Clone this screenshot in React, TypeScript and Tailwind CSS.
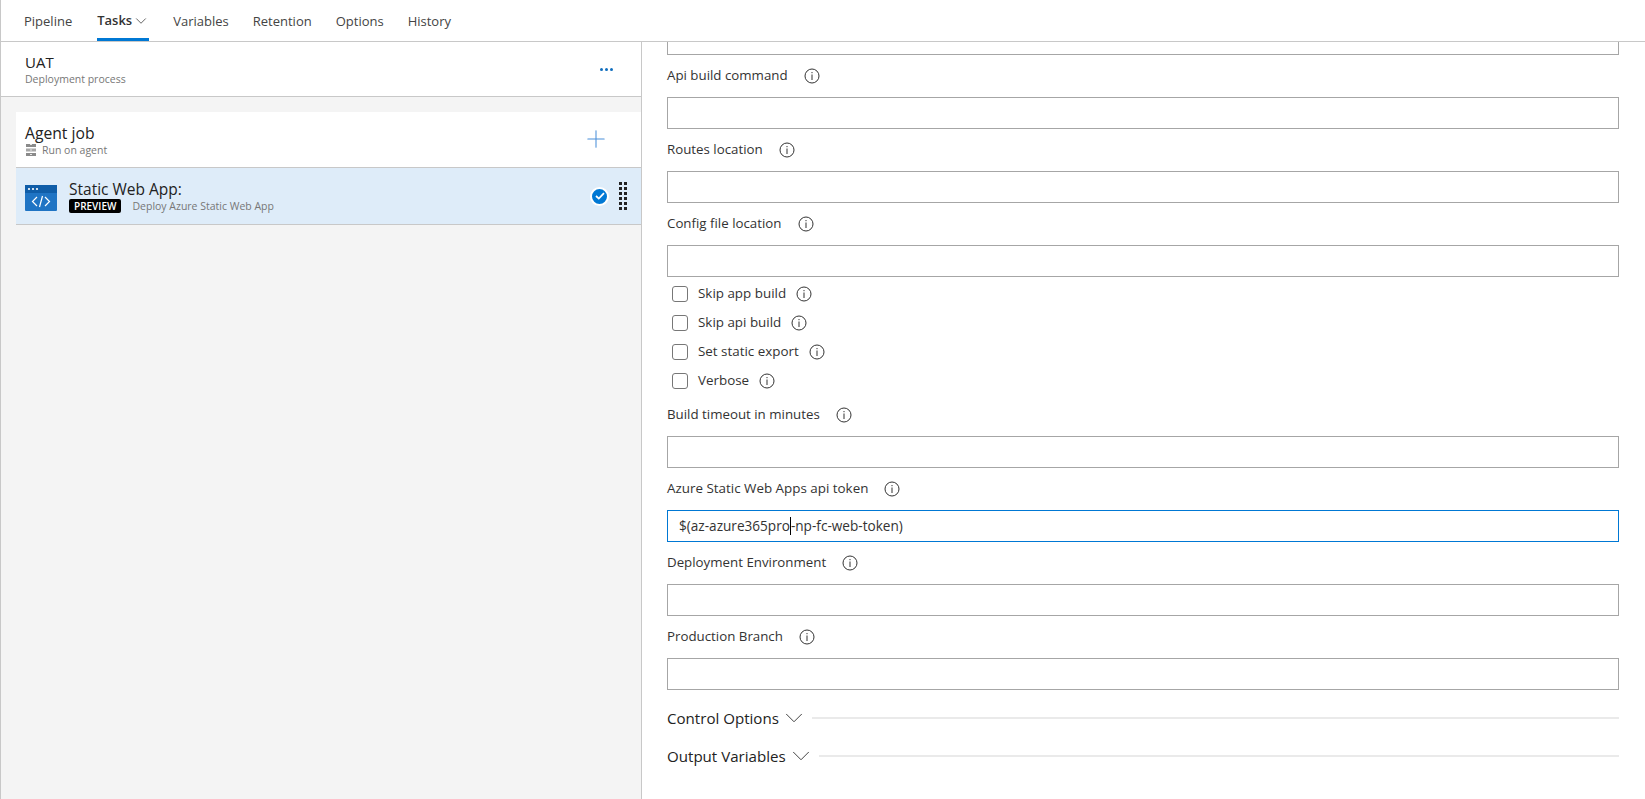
import { ChevronDown, Plus } from 'lucide-react';

const font = "font-['Open_Sans',sans-serif]";

function InfoIcon() {
  return (
    <svg width="16" height="16" viewBox="0 0 16 16" className="shrink-0" fill="none">
      <circle cx="8" cy="8" r="7" stroke="#333" strokeWidth="1" />
      <rect x="7.5" y="4" width="1" height="1.2" fill="#333" />
      <rect x="7.5" y="6.5" width="1" height="5.5" fill="#333" />
    </svg>
  );
}

function TaskIcon() {
  return (
    <svg width="32" height="26" viewBox="0 0 32 26" className="mt-[3px] shrink-0">
      <rect width="32" height="26" rx="1" fill="#1f74c4" />
      <rect width="32" height="8" fill="#0f5da8" />
      <circle cx="4" cy="4" r="1.1" fill="#fff" />
      <circle cx="8" cy="4" r="1.1" fill="#fff" />
      <circle cx="12" cy="4" r="1.1" fill="#fff" />
      <path d="M12 12l-4.5 4.5L12 21M20 12l4.5 4.5L20 21M17.5 11l-3 11" stroke="#fff" strokeWidth="1.2" fill="none" />
    </svg>
  );
}

function ServerIcon() {
  return (
    <svg width="10" height="12" viewBox="0 0 10 12">
      <rect width="10" height="3" fill="#8a8a8a" />
      <rect y="4.5" width="10" height="3" fill="#a6a6a6" />
      <rect y="9" width="10" height="3" fill="#8a8a8a" />
      <rect x="4" width="2" height="1" fill="#e5e5e5" />
      <rect x="4" y="5.5" width="2" height="1" fill="#e5e5e5" />
      <rect x="4" y="10" width="2" height="1" fill="#e5e5e5" />
    </svg>
  );
}

function DragHandle() {
  return (
    <div className="grid grid-cols-2 gap-x-[2px] gap-y-[2px]">
      {Array.from({ length: 12 }).map((_, i) => (
        <span key={i} className="w-[3px] h-[3px] bg-[#222]" />
      ))}
    </div>
  );
}

function Field({ label, gap = 'ml-[16px]' }: { label: string; gap?: string }) {
  return (
    <div>
      <div className="h-[42px] pb-[1px] flex items-center text-[13.3px] text-[#333]">
        <span>{label}</span>
        <span className={gap}><InfoIcon /></span>
      </div>
      <input className="block w-full h-8 border border-[#a6a6a6] bg-white outline-none" />
    </div>
  );
}

function Check({ label }: { label: string }) {
  return (
    <div className="h-[29px] flex items-center pl-[5px] text-[13.4px] text-[#333]">
      <span className="w-4 h-4 rounded-[3px] border border-[#777] bg-white mr-[10px]" />
      <span>{label}</span>
      <span className="ml-[10px]"><InfoIcon /></span>
    </div>
  );
}

function Section({ label }: { label: string }) {
  return (
    <div className="h-[36px] flex items-center text-[15.1px] text-[#222]">
      <span>{label}</span>
      <ChevronDown size={30} strokeWidth={0.8} className="text-[#444]" />
      <div className="flex-1 h-[2px] bg-[#eaeaea] ml-[3px]" />
    </div>
  );
}

export default function App() {
  return (
    <div className={`${font} w-full h-[799px] overflow-hidden bg-white border-l border-[#c8c8c8] flex flex-col`}>
      <nav className="h-[42px] shrink-0 border-b border-[#c8c8c8] flex pl-[23px] gap-[24px] text-[13px] text-[#444]">
        <span className="leading-[42px]">Pipeline</span>
        <span className="ml-px h-[41px] w-[52px] border-b-[3px] border-[#0078d4] flex items-center pt-[3px] text-[#333] font-semibold">
          Tasks
          <ChevronDown size={18} strokeWidth={1} className="shrink-0" />
        </span>
        <span className="leading-[42px]">Variables</span>
        <span className="leading-[42px]">Retention</span>
        <span className="leading-[42px]">Options</span>
        <span className="leading-[42px]">History</span>
      </nav>

      <div className="flex flex-1 min-h-0">
        <aside className="w-[641px] shrink-0 bg-[#f4f4f4] border-r border-[#c8c8c8]">
          <div className="h-[55px] bg-white border-b border-[#c8c8c8] flex items-center justify-between pl-[24px] pr-[28px]">
            <div>
              <div className="text-[15px] leading-[20px] text-[#222]">UAT</div>
              <div className="text-[10.5px] leading-[14px] text-[#777]">Deployment process</div>
            </div>
            <div className="flex gap-[2px]">
              <span className="w-[3px] h-[3px] rounded-full bg-[#106ebe]" />
              <span className="w-[3px] h-[3px] rounded-full bg-[#106ebe]" />
              <span className="w-[3px] h-[3px] rounded-full bg-[#106ebe]" />
            </div>
          </div>

          <div className="ml-[15px] mt-[15px]">
            <div className="h-[56px] bg-white border-b border-[#c8c8c8] flex items-center justify-between pl-[9px] pr-[31px]">
              <div>
                <div className="text-[15.7px] leading-[20px] text-[#222]">Agent job</div>
                <div className="flex items-center text-[10.5px] leading-[14px] text-[#777]">
                  <span className="ml-px"><ServerIcon /></span>
                  <span className="ml-[6px]">Run on agent</span>
                </div>
              </div>
              <Plus size={28} strokeWidth={0.9} className="text-[#4a90d9] -mt-[2px]" />
            </div>
            <div className="h-[57px] bg-[#deecf9] border-b border-[#c8c8c8] flex items-center pl-[9px] pr-[14px]">
              <TaskIcon />
              <div className="ml-[12px] flex-1">
                <div className="text-[15.5px] leading-[20px] text-[#222]">Static Web App:</div>
                <div className="flex items-center text-[10.5px] leading-[14px] text-[#777]">
                  <span className="bg-black text-white rounded-[2px] px-[5px] text-[10px] leading-[14px] font-semibold">PREVIEW</span>
                  <span className="ml-[11px]">Deploy Azure Static Web App</span>
                </div>
              </div>
              <span className="w-[19px] h-[19px] rounded-full bg-[#0078d4] border-2 border-white flex items-center justify-center mr-[10px]">
                <svg width="10" height="8" viewBox="0 0 10 8" fill="none">
                  <path d="M1 4l2.8 2.6L9 1.2" stroke="#fff" strokeWidth="1.8" />
                </svg>
              </span>
              <DragHandle />
            </div>
          </div>
        </aside>

        <main className="flex-1 min-w-0 pl-[25px] pr-[26px]">
          <div className="h-[13px] border border-t-0 border-[#a6a6a6]" />
          <Field label="Api build command" />
          <Field label="Routes location" />
          <Field label="Config file location" />
          <div className="pt-[2px]">
            <Check label="Skip app build" />
            <Check label="Skip api build" />
            <Check label="Set static export" />
            <Check label="Verbose" />
          </div>
          <div className="-mt-[1px]">
            <Field label="Build timeout in minutes" />
          </div>
          <div>
            <div className="h-[42px] pb-[1px] flex items-center text-[13.4px] text-[#333]">
              <span>Azure Static Web Apps api token</span>
              <span className="ml-[16px]"><InfoIcon /></span>
            </div>
            <div className="h-8 border border-[#0078d4] bg-white pl-[11px] flex items-center text-[13.6px] text-[#333]">
              <span>$(az-azure365pro</span>
              <span className="w-px h-[18px] bg-black" />
              <span>-np-fc-web-token)</span>
            </div>
          </div>
          <Field label="Deployment Environment" />
          <Field label="Production Branch" />
          <div className="mt-[10px]">
            <Section label="Control Options" />
            <div className="h-[2px]" />
            <Section label="Output Variables" />
          </div>
        </main>
      </div>
    </div>
  );
}
